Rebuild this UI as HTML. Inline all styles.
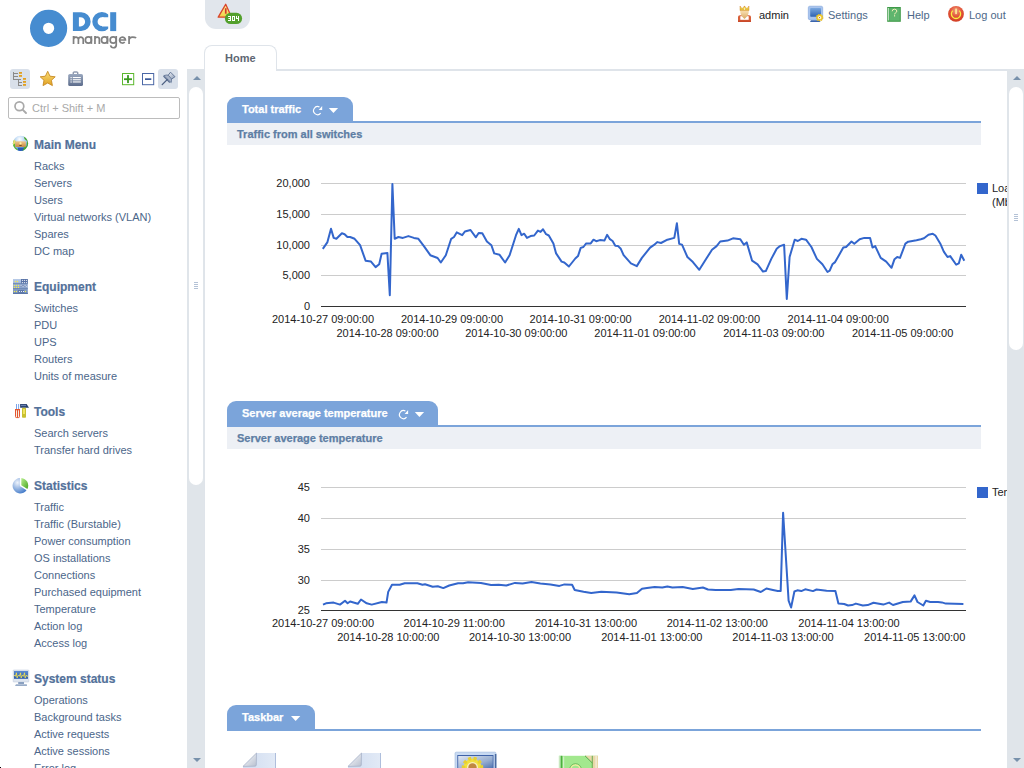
<!DOCTYPE html>
<html><head><meta charset="utf-8">
<style>
*{margin:0;padding:0;box-sizing:border-box}
html,body{width:1024px;height:768px;overflow:hidden;background:#fff;font-family:"Liberation Sans",sans-serif;position:relative}
.abs{position:absolute}
/* logo */
#logo-c{left:30px;top:10px;width:37px;height:37px;border-radius:50%;background:#468cd0}
#logo-h{left:43px;top:23px;width:11px;height:11px;border-radius:50%;background:#fff}
#logo-dci{left:71px;top:5px;font-size:26px;font-weight:bold;color:#468cd0;letter-spacing:-1px;line-height:34px}
#logo-mgr{left:72px;top:28px;font-size:17px;color:#858585;line-height:20px;letter-spacing:-0.2px}
/* alert */
#alert{left:205px;top:0;width:45px;height:29px;background:#e1e6ec;border-radius:0 0 11px 11px}
/* top links */
.tl{font-size:11px;color:#4d6889;top:8px;line-height:14px}
/* sidebar */
.tb{top:69px;width:20px;height:20px;border-radius:3px}
#search{left:8px;top:97px;width:172px;height:22px;border:1px solid #bcbcbc;border-radius:2px}
#search span{position:absolute;left:23px;top:4px;font-size:11px;color:#a9a9a9;line-height:13px}
.mh{left:34px;font-size:12px;font-weight:bold;color:#53719a;line-height:14px;-webkit-text-stroke:0.2px #53719a}
.mi{left:34px;font-size:11px;color:#4b668a;line-height:13px}
/* scroll */
#sscroll{left:187px;top:69px;width:18px;height:699px;background:#e0e5ea}
#sthumb{left:189px;top:87px;width:14px;height:398px;background:#fff;border-radius:7px}
#rscroll{left:1007px;top:69px;width:17px;height:699px;background:#e0e5ea}
#rthumb{left:1009px;top:87px;width:14px;height:263px;background:#fff;border-radius:7px}
.arru{width:0;height:0;border-left:4px solid transparent;border-right:4px solid transparent;border-bottom:4px solid #7891ab}
.arrd{width:0;height:0;border-left:4px solid transparent;border-right:4px solid transparent;border-top:4px solid #7891ab}
/* panel */
#pborder{left:204px;top:60px;width:1px;height:708px;background:#dfe4ea}
#tabline{left:276px;top:69px;width:748px;height:2px;background:#dfe4ea}
#tab{left:204px;top:45px;width:73px;height:26px;border:1px solid #dfe4ea;border-bottom:none;border-radius:8px 8px 0 0;background:#fff}
#tab span{position:absolute;left:20px;top:6px;font-size:11px;font-weight:bold;color:#5e6672;line-height:13px}
/* widgets */
.wtab{left:227px;height:25px;background:#7ba4da;border-radius:9px 9px 0 0}
.wtab span{position:absolute;left:15px;top:6px;font-size:11px;font-weight:bold;color:#fff;line-height:13px;-webkit-text-stroke:0.25px #fff}
.wline{left:227px;width:754px;height:2px;background:#7ba4da}
.wsub{left:227px;width:754px;height:22px;background:#edf0f5}
.wsub span{position:absolute;left:10px;top:5px;font-size:11px;font-weight:bold;color:#5e7ea4;line-height:13px;-webkit-text-stroke:0.25px #5e7ea4}
.ax{font-size:11px;color:#222;line-height:12px;white-space:nowrap}
</style></head><body>

<svg class="abs" style="left:0;top:0" width="150" height="56" viewBox="0 0 150 56">
<circle cx="48.6" cy="28.3" r="12.1" fill="none" stroke="#468cd0" stroke-width="13"/>
<path fill="#468cd0" fill-rule="evenodd" d="M72.9,12.2H81.2A9.45,9.45 0 0 1 81.2,31.1H72.9Z M78.9,17.2H80.5A4.6,4.6 0 0 1 80.5,26.4H78.9Z"/>
<defs><clipPath id="cclip"><path d="M90,10H108.2V17.3H102V26.5H108.2V34H90Z"/></clipPath></defs>
<circle cx="101.9" cy="21.65" r="6.95" fill="none" stroke="#468cd0" stroke-width="5.3" clip-path="url(#cclip)"/>
<rect x="110.2" y="12.2" width="6" height="18.9" fill="#468cd0"/>
<g fill="none" stroke="#808080" stroke-width="1.7">
<path d="M73.55,36.1V43.9M73.55,39.5A2.42,2.42 0 0 1 78.4,39.5V43.9M78.4,39.5A2.42,2.42 0 0 1 83.25,39.5V43.9"/>
<circle cx="88.4" cy="40" r="3.05"/><path d="M91.35,36.1V43.9"/>
<path d="M94.95,36.1V43.9M94.95,39.3A2.2,2.2 0 0 1 99.35,39.3V43.9"/>
<circle cx="104.5" cy="40" r="3.05"/><path d="M107.45,36.1V43.9"/>
<circle cx="113.2" cy="40" r="3.05"/><path d="M116.25,36.1V45.1A2.85,2.85 0 0 1 110.6,45.4"/>
<path d="M119.55,40H125.45A2.95,2.95 0 1 0 124.7,42.05"/>
<path d="M129.05,36.1V43.9M129.05,40.6Q129.05,37.05 132.6,37.05Q135,37.05 136.2,37.9"/>
</g>
</svg>
<div class="abs" id="alert"></div>
<svg class="abs" style="left:205px;top:0" width="45" height="29" viewBox="205 0 45 29">
<defs><linearGradient id="ygr" x1="0" y1="0" x2="0" y2="1"><stop offset="0" stop-color="#fff7a0"/><stop offset="1" stop-color="#f0d040"/></linearGradient></defs>
<path d="M225.7,4.3L231.6,17.2H218.2Z" fill="url(#ygr)" stroke="#d9452c" stroke-width="1.3" stroke-linejoin="round"/>
<rect x="224.9" y="8.2" width="1.7" height="5.5" fill="#d23a2a"/>
<rect x="224.9" y="12.8" width="17.2" height="11.3" rx="5.6" fill="#52a02c"/>
<g fill="#fff">
<path d="M228,15.9h3v5.1h-3v-1h2v-1.1h-1.6v-0.9h1.6v-1.1h-2z"/>
<path d="M232,15.9h3v5.1h-3z M233,16.9v3.1h1v-3.1z" fill-rule="evenodd"/>
<path d="M236,15.9h1v2.1h1v-2.1h1v5.1h-1v-2h-2z"/>
</g>
</svg>

<div class="abs tl" style="left:759px;color:#222">admin</div>
<div class="abs tl" style="left:828px">Settings</div>
<div class="abs tl" style="left:907px">Help</div>
<div class="abs tl" style="left:969px">Log out</div>
<svg class="abs" style="left:730px;top:0" width="240" height="28" viewBox="730 0 240 28">
<defs>
<linearGradient id="face" x1="0" y1="0" x2="0" y2="1"><stop offset="0" stop-color="#fbe3b8"/><stop offset="1" stop-color="#d9a860"/></linearGradient>
<linearGradient id="crown" x1="0" y1="0" x2="0" y2="1"><stop offset="0" stop-color="#f8e860"/><stop offset="1" stop-color="#e0b030"/></linearGradient>
<linearGradient id="scr" x1="0" y1="0" x2="0" y2="1"><stop offset="0" stop-color="#7aa8e0"/><stop offset="1" stop-color="#2f62b0"/></linearGradient>
<radialGradient id="pwr" cx="0.5" cy="0.3" r="0.7"><stop offset="0" stop-color="#f3a080"/><stop offset="0.5" stop-color="#e2553a"/><stop offset="1" stop-color="#d23d22"/></radialGradient>
</defs>
<!-- king -->
<path d="M738,17Q738,15.4 740,15.3H749Q751,15.4 751,17V22H738Z" fill="#d8603a"/>
<rect x="738" y="20.4" width="13" height="1.6" fill="#c94a2a"/>
<rect x="740.3" y="16.2" width="8.4" height="3.6" fill="#fff"/>
<path d="M740.2,10.4H748.8Q749,15.5 744.5,18.9Q740,15.5 740.2,10.4Z" fill="url(#face)"/>
<path d="M740,6.3L742.2,8.6L744.5,6L746.8,8.6L749,6.3V10.6H740Z" fill="url(#crown)" stroke="#d09030" stroke-width="0.45"/>
<circle cx="740.3" cy="6.6" r="0.45" fill="#e05a30"/><circle cx="744.5" cy="6.3" r="0.45" fill="#e05a30"/><circle cx="748.7" cy="6.6" r="0.45" fill="#e05a30"/>
<circle cx="744.5" cy="9" r="0.65" fill="#fff"/>
<!-- settings -->
<rect x="808.3" y="6.2" width="14.4" height="13.5" rx="1.5" fill="#a8c4ee" stroke="#7fa2da" stroke-width="0.6"/>
<rect x="810.2" y="7.9" width="10.8" height="8.9" rx="0.8" fill="url(#scr)"/>
<path d="M811,20.2H819.5L820.5,22H810Z" fill="#3a64ad"/>
<circle cx="819.6" cy="17.6" r="3.1" fill="#f2d030" stroke="#e8b820" stroke-width="1.3" stroke-dasharray="1.2 0.9"/>
<circle cx="819.6" cy="17.6" r="1.5" fill="#fff"/>
<circle cx="819.6" cy="17.6" r="0.6" fill="#c04020"/>
<!-- help -->
<rect x="887.2" y="7" width="13.6" height="14.8" fill="#3f9a48"/>
<rect x="889.3" y="8.2" width="10.5" height="12.5" fill="#5fb56e"/>
<rect x="887.9" y="8" width="0.9" height="12.5" fill="#d8f0d8"/>
<path d="M892.2,11.3Q892.2,9.2 894.5,9.2Q896.8,9.2 896.8,11.1Q896.8,12.3 895.2,13.2Q894.6,13.6 894.6,14.4" fill="none" stroke="#fff4c0" stroke-width="0.9"/>
<rect x="894" y="15.3" width="1.1" height="1.1" fill="#fff4c0"/>
<!-- power -->
<circle cx="956" cy="13.9" r="7.9" fill="url(#pwr)"/>
<path d="M952.8,10.6A4.6,4.6 0 1 0 959.2,10.6" fill="none" stroke="#f8f040" stroke-width="1.3"/>
<rect x="955.3" y="8.6" width="1.5" height="5.5" fill="#fff8a0"/>
</svg>
<div class="abs tb" style="left:10px;background:#d9e0ea"></div>
<div class="abs tb" style="left:158px;background:#d9e0ea"></div>
<div class="abs" id="search"><span>Ctrl + Shift + M</span></div>
<svg class="abs" style="left:0;top:64px" width="186" height="60" viewBox="0 64 186 60">
<defs>
<linearGradient id="star" x1="0" y1="0" x2="0" y2="1"><stop offset="0" stop-color="#fbe07a"/><stop offset="1" stop-color="#e0a020"/></linearGradient>
<linearGradient id="brief" x1="0" y1="0" x2="0" y2="1"><stop offset="0" stop-color="#9aa8bf"/><stop offset="1" stop-color="#5d6d8c"/></linearGradient>
<linearGradient id="pinh" x1="0" y1="0" x2="1" y2="1"><stop offset="0" stop-color="#f0f3f8"/><stop offset="1" stop-color="#8a9ab4"/></linearGradient>
</defs>
<!-- tree -->
<g fill="#8a8a8a">
<rect x="13" y="72" width="1" height="8"/>
<rect x="13" y="73" width="5" height="1"/>
<rect x="13" y="76" width="5" height="1"/>
<rect x="13" y="79" width="8" height="1"/>
<rect x="18" y="79" width="1" height="7"/>
<rect x="18" y="82" width="4" height="1"/>
<rect x="18" y="85" width="4" height="1"/>
</g>
<g fill="#e2a01e">
<rect x="19" y="72" width="3" height="1.8"/>
<rect x="19" y="75" width="3" height="1.8"/>
<rect x="23" y="78" width="3" height="1.8"/>
<rect x="23" y="81" width="3" height="1.8"/>
<rect x="23" y="84" width="3" height="1.8"/>
</g>
<!-- star -->
<path d="M47.7,71.3L50,76.2L55.2,76.8L51.4,80.3L52.4,85.6L47.7,83L43,85.6L44,80.3L40.2,76.8L45.4,76.2Z" fill="url(#star)" stroke="#c78a22" stroke-width="0.9" stroke-linejoin="round"/>
<!-- briefcase -->
<path d="M73.2,74.2V72.6Q73.2,72 73.8,72H77.2Q77.8,72 77.8,72.6V74.2" fill="none" stroke="#5d6d8c" stroke-width="1"/>
<rect x="68.2" y="74" width="14.8" height="12" rx="1.6" fill="url(#brief)"/>
<g fill="#fff"><rect x="70.5" y="77" width="1.2" height="1.2"/><rect x="70.5" y="79.2" width="1.2" height="1.2"/><rect x="70.5" y="81.4" width="1.2" height="1.2"/>
<rect x="72.8" y="77" width="8" height="1.1"/><rect x="72.8" y="79.2" width="8" height="1.1"/><rect x="72.8" y="81.4" width="8" height="1.1"/></g>
<!-- plus -->
<rect x="122.5" y="73.5" width="11.2" height="11.2" fill="#fff" stroke="#5cb82e" stroke-width="1"/>
<rect x="124" y="78.3" width="8" height="1.8" fill="#3a9a20"/>
<rect x="127.1" y="75.1" width="1.8" height="8" fill="#3a9a20"/>
<!-- minus -->
<rect x="142.5" y="73.5" width="11.2" height="11.2" fill="#fff" stroke="#4a67a6" stroke-width="1"/>
<rect x="145" y="78.3" width="6.3" height="1.7" fill="#3c5a9a"/>
<!-- pin -->
<path d="M170.5,72.2L175,76.7L171.3,79.3L167.8,75.7Z" fill="url(#pinh)" stroke="#5a6e90" stroke-width="0.9" stroke-linejoin="round"/>
<path d="M163.5,76.2L169.8,82.5" stroke="#5a6e90" stroke-width="1.2"/>
<path d="M163.8,75.6Q167,74.6 168.3,75.2L171.4,78.8Q171.6,81.2 171.2,82.6Z" fill="#a8b4c8" stroke="#5a6e90" stroke-width="0.8" stroke-linejoin="round"/>
<path d="M167.2,79.6L162.2,84.6" stroke="#4a5e80" stroke-width="1.3" stroke-linecap="round"/>
<!-- search -->
<circle cx="19.4" cy="106.3" r="4.4" fill="none" stroke="#a9a9a9" stroke-width="1.7"/>
<path d="M22.6,109.6L26,113" stroke="#a9a9a9" stroke-width="1.9" stroke-linecap="round"/>
</svg>
<svg class="abs" style="left:0;top:130px" width="34" height="560" viewBox="0 130 34 560">
<defs>
<linearGradient id="gsky" x1="0" y1="0" x2="0" y2="1"><stop offset="0" stop-color="#8ec0f0"/><stop offset="1" stop-color="#f4f8ff"/></linearGradient>
<linearGradient id="gbox" x1="0" y1="0" x2="0" y2="1"><stop offset="0" stop-color="#f0c890"/><stop offset="1" stop-color="#c98a40"/></linearGradient>
<linearGradient id="rack" x1="0" y1="0" x2="0" y2="1"><stop offset="0" stop-color="#b8cbe8"/><stop offset="1" stop-color="#6e8ab8"/></linearGradient>
<radialGradient id="pieb" cx="0.35" cy="0.3" r="0.8"><stop offset="0" stop-color="#eef3fb"/><stop offset="1" stop-color="#3f78c8"/></radialGradient>
<linearGradient id="pieg" x1="0" y1="0" x2="1" y2="1"><stop offset="0" stop-color="#b8ef90"/><stop offset="1" stop-color="#4aa620"/></linearGradient>
<linearGradient id="mon" x1="0" y1="0" x2="0" y2="1"><stop offset="0" stop-color="#5a8ad0"/><stop offset="1" stop-color="#2a5aa8"/></linearGradient>
</defs>
<!-- globe -->
<defs><radialGradient id="gsk2" cx="0.45" cy="0.25" r="0.6"><stop offset="0" stop-color="#ffffff"/><stop offset="1" stop-color="#6aa8e8"/></radialGradient>
<clipPath id="gclip"><circle cx="20.5" cy="143.4" r="7.6"/></clipPath></defs>
<g clip-path="url(#gclip)">
<rect x="12" y="135" width="17" height="17" fill="url(#gsk2)"/>
<path d="M23.5,135L29,135L29,152L21,152L23,148L26.5,146L27,141L24.5,139Z" fill="#4aa82a"/>
<path d="M12,140L15.5,141L15,147L18,149.5L16,152L12,152Z" fill="#5cb830"/>
<path d="M17.5,147.5H24L22.5,152H18.5Z" fill="#2a5cb8"/>
<path d="M13,140.5L15,139.5L15.5,143L13,145Z" fill="#e8e070"/>
</g>
<rect x="15.2" y="141.3" width="10.6" height="5.6" fill="url(#gbox)"/>
<circle cx="20.5" cy="143.3" r="1.1" fill="#fff6a0"/>
<rect x="19.3" y="145" width="2.4" height="0.9" fill="#6a4a20"/>
<!-- equipment rack -->
<rect x="13" y="279" width="14.8" height="15" fill="url(#rack)"/>
<rect x="13" y="283.4" width="14.8" height="0.8" fill="#5a76a8"/>
<rect x="13" y="288.2" width="14.8" height="0.9" fill="#6a84b4"/>
<rect x="13" y="292.9" width="14.8" height="1.1" fill="#5a76a8"/>
<rect x="21" y="279" width="6.8" height="4.5" fill="#5872a6"/>
<rect x="18" y="290.2" width="6" height="2.5" fill="#5872a6"/>
<rect x="20.3" y="285" width="6.5" height="1.7" fill="#7a90bc"/>
<g fill="#f4ee50">
<circle cx="15.4" cy="281.5" r="0.65"/><circle cx="17.5" cy="281.5" r="0.65"/>
<circle cx="14.4" cy="285.4" r="0.65"/><circle cx="16.4" cy="285.4" r="0.65"/><circle cx="18.5" cy="285.4" r="0.65"/>
<circle cx="14.4" cy="287.4" r="0.65"/><circle cx="16.4" cy="287.4" r="0.65"/><circle cx="18.5" cy="287.4" r="0.65"/>
<circle cx="14.4" cy="291.5" r="0.65"/><circle cx="16.4" cy="291.5" r="0.65"/><circle cx="25.5" cy="291.5" r="0.65"/>
</g>
<g fill="#f4f6fa">
<rect x="21.9" y="279.9" width="1" height="1"/><rect x="23.9" y="279.9" width="1" height="1"/><rect x="25.9" y="279.9" width="1" height="1"/>
<rect x="21.9" y="282.1" width="1" height="1"/><rect x="23.9" y="282.1" width="1" height="1"/><rect x="25.9" y="282.1" width="1" height="1"/>
<rect x="20.6" y="285" width="0.9" height="0.9"/><rect x="22.6" y="285.9" width="0.9" height="0.9"/><rect x="24.6" y="285" width="0.9" height="0.9"/><rect x="25.8" y="285.9" width="0.9" height="0.9"/>
<rect x="18.9" y="291" width="1" height="1"/><rect x="20.9" y="291" width="1" height="1"/><rect x="23" y="291" width="1" height="1"/>
</g>
<!-- tools -->
<rect x="16" y="404" width="0.9" height="5" fill="#6a9ae8"/>
<rect x="18.2" y="404" width="0.9" height="5" fill="#6a9ae8"/>
<path d="M15,409H20V416.5Q20,418 18.5,418H16.5Q15,418 15,416.5Z" fill="#f6efe6"/>
<path d="M15,409H20V410.3H15Z" fill="#e4552e"/>
<path d="M15.5,410V416.5Q15.5,417.6 16.6,417.6H18.4Q19.5,417.6 19.5,416.5V410" fill="none" stroke="#e4552e" stroke-width="1"/>
<rect x="17" y="410" width="1" height="7.6" fill="#e4552e"/>
<path d="M20.1,404H26.6L29,407.8H20.1Z" fill="#28406e"/>
<rect x="21" y="404.8" width="5" height="1.3" fill="#6880b0"/>
<rect x="22" y="407.8" width="4" height="10" rx="0.8" fill="#c8c030"/>
<rect x="23" y="409" width="2" height="5" fill="#f0e460"/>
<!-- statistics pie -->
<path d="M19.9,478V485.9L26.5,490.2A7.7,7.7 0 1 1 19.9,478Z" fill="url(#pieb)"/>
<path d="M21.3,477.9A7.7,7.7 0 0 1 27.4,489L21.3,485.2Z" fill="url(#pieg)"/>
<!-- system status monitor -->
<rect x="13.2" y="670" width="15.6" height="12" rx="0.6" fill="#dfe6f0" stroke="#b8c4d8" stroke-width="0.5"/>
<rect x="14" y="671" width="14" height="7.8" fill="url(#mon)"/>
<polyline points="14,676.2 14.8,675.2 15.6,676.3 16.4,672.8 17.1,677.9 17.9,676 18.6,675.2 19.5,676.3 20.5,672.8 21.2,677.9 22,676 22.6,675.2 23.6,676.3 24.5,672.8 25.2,677.9 26,676 26.6,675.2 27.3,676.3 28,676" fill="none" stroke="#f2e050" stroke-width="0.9" stroke-linejoin="round"/>
<rect x="18.2" y="682" width="5.8" height="2" fill="#8aa0c0"/>
<path d="M16,684.2H26.8L27,686H15Z" fill="#98acc8"/>
</svg>
<div class="abs mh" style="top:138px">Main Menu</div>
<div class="abs mi" style="top:160px">Racks</div>
<div class="abs mi" style="top:177px">Servers</div>
<div class="abs mi" style="top:194px">Users</div>
<div class="abs mi" style="top:211px">Virtual networks (VLAN)</div>
<div class="abs mi" style="top:228px">Spares</div>
<div class="abs mi" style="top:245px">DC map</div>

<div class="abs mh" style="top:280px">Equipment</div>
<div class="abs mi" style="top:302px">Switches</div>
<div class="abs mi" style="top:319px">PDU</div>
<div class="abs mi" style="top:336px">UPS</div>
<div class="abs mi" style="top:353px">Routers</div>
<div class="abs mi" style="top:370px">Units of measure</div>

<div class="abs mh" style="top:405px">Tools</div>
<div class="abs mi" style="top:427px">Search servers</div>
<div class="abs mi" style="top:444px">Transfer hard drives</div>

<div class="abs mh" style="top:479px">Statistics</div>
<div class="abs mi" style="top:501px">Traffic</div>
<div class="abs mi" style="top:518px">Traffic (Burstable)</div>
<div class="abs mi" style="top:535px">Power consumption</div>
<div class="abs mi" style="top:552px">OS installations</div>
<div class="abs mi" style="top:569px">Connections</div>
<div class="abs mi" style="top:586px">Purchased equipment</div>
<div class="abs mi" style="top:603px">Temperature</div>
<div class="abs mi" style="top:620px">Action log</div>
<div class="abs mi" style="top:637px">Access log</div>

<div class="abs mh" style="top:672px">System status</div>
<div class="abs mi" style="top:694px">Operations</div>
<div class="abs mi" style="top:711px">Background tasks</div>
<div class="abs mi" style="top:728px">Active requests</div>
<div class="abs mi" style="top:745px">Active sessions</div>
<div class="abs mi" style="top:762px">Error log</div>

<div class="abs" id="sscroll"></div>
<div class="abs" id="sthumb"></div>
<div class="abs arru" style="left:193px;top:76px"></div>
<div class="abs arrd" style="left:193px;top:758px"></div>

<div class="abs" id="pborder"></div>
<div class="abs" id="tabline"></div>
<div class="abs" id="tab"><span>Home</span></div>

<div class="abs" id="rscroll"></div>
<div class="abs" id="rthumb"></div>
<div class="abs arru" style="left:1013px;top:76px"></div>
<div class="abs arrd" style="left:1013px;top:758px"></div>

<!-- CHARTS -->
<svg class="abs" style="left:0;top:0" width="1007" height="768" viewBox="0 0 1007 768" font-family="Liberation Sans" font-size="11" fill="#222222">
<rect x="321" y="183" width="645" height="1" fill="#cccccc"/>
<rect x="321" y="214" width="645" height="1" fill="#cccccc"/>
<rect x="321" y="245" width="645" height="1" fill="#cccccc"/>
<rect x="321" y="275" width="645" height="1" fill="#cccccc"/>
<rect x="321" y="306" width="645" height="1" fill="#333333"/>
<text x="310" y="187" text-anchor="end">20,000</text>
<text x="310" y="218" text-anchor="end">15,000</text>
<text x="310" y="249" text-anchor="end">10,000</text>
<text x="310" y="279" text-anchor="end">5,000</text>
<text x="310" y="310" text-anchor="end">0</text>
<text x="323" y="323" text-anchor="middle">2014-10-27 09:00:00</text>
<text x="452" y="323" text-anchor="middle">2014-10-29 09:00:00</text>
<text x="580.6" y="323" text-anchor="middle">2014-10-31 09:00:00</text>
<text x="709.4" y="323" text-anchor="middle">2014-11-02 09:00:00</text>
<text x="838.2" y="323" text-anchor="middle">2014-11-04 09:00:00</text>
<text x="387.5" y="337" text-anchor="middle">2014-10-28 09:00:00</text>
<text x="516.3" y="337" text-anchor="middle">2014-10-30 09:00:00</text>
<text x="645" y="337" text-anchor="middle">2014-11-01 09:00:00</text>
<text x="773.8" y="337" text-anchor="middle">2014-11-03 09:00:00</text>
<text x="902.6" y="337" text-anchor="middle">2014-11-05 09:00:00</text>
<polyline points="322.8,248.8 327.3,242.4 331,228.8 333.7,237.9 336.4,238.8 341.9,233.3 344.6,234.2 347.4,237 350.1,237 354.6,238.8 360.1,245.2 365.6,260.7 371,261.6 375.6,267.1 379.2,264.3 381.6,253.8 387.4,253 389.8,295.3 392.4,184.1 394.7,238.8 398.4,237 402.9,237.9 408.4,236.1 413.9,237.9 418.4,238.8 423.9,246.1 430.3,255.2 437.6,258 440.8,262.5 445.8,255.2 451.2,238.8 454,237 456.7,232.4 462.2,235.2 464.9,231.5 470.5,230 475.9,237.3 478.7,233 482.3,233.3 486.9,241.5 491.4,245.2 494.2,253.4 499.6,254.8 505.1,262.5 509.6,255.2 516,235.2 518.8,228.8 521.5,235.2 524.2,233.7 527,237.9 530.6,236.1 534.2,235.5 537.9,230.6 540.6,231.9 543,229.3 546.1,234.2 548.8,235.5 553.4,243.4 556.1,253.4 561.6,261.6 564.3,262.5 568.9,266.5 575.3,258.5 578,256.1 580.7,247.9 583.4,247 586.2,243.4 590.7,243.4 593.5,239.7 596.2,241.2 599.9,240.1 604.4,240.6 607.1,234.8 609.9,239.2 612.6,241 615.3,245.7 618.1,246.1 620.8,248.8 623.6,255.2 630.9,263.4 636.8,266.1 641.9,257.9 650.1,247.6 653.7,245.2 657.4,242.1 661,243 667.4,239.7 674.3,237.9 676.9,223.3 679.2,243.9 682,244.6 687.4,257 692.9,262.1 699.3,269.8 705.6,259.8 712,249.7 716.6,246.1 720.2,241.5 727.5,240.6 733,238.3 740.3,239.2 743.9,244.8 746.7,242.4 752.1,260.7 757.6,264.3 763,271.6 765.8,271.1 771.3,258.9 776.7,248.8 780,246.1 784.1,244.8 786.8,299 789.6,257 794.7,239.7 797.8,241 801.4,238.8 806,239.7 811.4,247 816.9,258.9 822.4,264.3 827.5,272 829.7,270.7 832.4,264.3 835.1,262.1 843.3,247.6 846.1,247 851.5,241.5 854.3,243.7 859.7,239.2 864.3,237.9 870.1,237.9 872.5,247.6 875.2,246.1 880.7,257.9 886.2,261.6 891.5,267.8 894.5,259.2 897.2,257 900,257.9 905.4,243.6 908.2,241.7 916.5,240.3 920.8,239.2 924,238.2 928.5,234.7 932.8,233.8 935.4,235.5 940.2,243.4 943.8,251.6 947.5,257 950.2,256.1 956.2,264.7 958.8,263.4 961.2,254.8 964.3,260.7" fill="none" stroke="#3366cc" stroke-width="2" stroke-linejoin="round"/>
<rect x="977" y="183" width="11" height="11" fill="#3366cc"/>
<text x="992" y="192">Load</text>
<text x="992" y="206">(Mb/s)</text>
<rect x="321" y="487" width="645" height="1" fill="#cccccc"/>
<rect x="321" y="518" width="645" height="1" fill="#cccccc"/>
<rect x="321" y="549" width="645" height="1" fill="#cccccc"/>
<rect x="321" y="580" width="645" height="1" fill="#cccccc"/>
<rect x="321" y="610" width="645" height="1" fill="#333333"/>
<text x="310" y="491" text-anchor="end">45</text>
<text x="310" y="522" text-anchor="end">40</text>
<text x="310" y="553" text-anchor="end">35</text>
<text x="310" y="584" text-anchor="end">30</text>
<text x="310" y="614" text-anchor="end">25</text>
<text x="323" y="627" text-anchor="middle">2014-10-27 09:00:00</text>
<text x="454.2" y="627" text-anchor="middle">2014-10-29 11:00:00</text>
<text x="586" y="627" text-anchor="middle">2014-10-31 13:00:00</text>
<text x="717.3" y="627" text-anchor="middle">2014-11-02 13:00:00</text>
<text x="849" y="627" text-anchor="middle">2014-11-04 13:00:00</text>
<text x="388.3" y="641" text-anchor="middle">2014-10-28 10:00:00</text>
<text x="520" y="641" text-anchor="middle">2014-10-30 13:00:00</text>
<text x="651.8" y="641" text-anchor="middle">2014-11-01 13:00:00</text>
<text x="783" y="641" text-anchor="middle">2014-11-03 13:00:00</text>
<text x="914.7" y="641" text-anchor="middle">2014-11-05 13:00:00</text>
<polyline points="323,604.6 326,603.3 333.6,602.6 340,604.6 345,600.8 347.6,603.3 350.1,601.5 357.8,603.8 361,599.5 366.7,603.3 371.7,604.6 381.9,602 386.5,602.6 388.2,591.9 392,584.8 399.7,584.8 404.7,583.3 417.4,583.3 422.5,584.8 425,584.3 432.7,586.8 437.8,586.3 443.3,588.1 449.2,585.5 458.1,583.3 463.1,583.3 468.2,582.2 480.9,583 491.1,585 498.7,584.8 506.3,585.5 515,582.9 522.6,583.4 531.5,581.9 540.4,583.4 550.5,584.4 559.4,585.9 564.5,584.4 572.1,584.7 574.7,590 583.6,591.8 591.2,593.1 601.3,591.8 616.6,592.5 629.3,594.3 636.9,593.1 642,588.7 647,588 654.7,587 662.3,587.5 667.4,586.4 672.4,587.5 682.6,587 692.8,589 702.9,587.5 708,589.5 715.6,590 730.8,590 738.5,589 753.7,589.5 760.8,592 766.4,588.5 772.9,589.9 777.8,590.9 780.7,590.9 783.1,512.7 788.6,600.6 791.1,607.5 794.4,591.5 797.3,590.3 801.3,591.1 805.2,589.3 813,591.1 816.5,589.5 826.6,590.7 835.4,590.9 838.4,603.6 844.2,604 848.1,605.5 852,605.1 855.9,603.6 862.8,605.5 867.7,605.1 873.5,602.8 883.3,604.6 889.1,602.6 893,605 902.8,602 910.6,601.6 914.5,595.4 917.5,602 923.3,605.5 925.9,600.8 930.2,602 938,602 941.9,602.4 945.8,603.6 963.4,604" fill="none" stroke="#3366cc" stroke-width="2" stroke-linejoin="round"/>
<rect x="977" y="487" width="11" height="11" fill="#3366cc"/>
<text x="992" y="496">Temperature</text>
</svg>
<!-- /CHARTS -->
<!-- widget 1 -->
<div class="abs wtab" style="top:97px;width:126px"><span>Total traffic</span></div>
<div class="abs wline" style="top:121px"></div>
<div class="abs wsub" style="top:123px"><span>Traffic from all switches</span></div>

<!-- widget 2 -->
<div class="abs wtab" style="top:401px;width:211px"><span>Server average temperature</span></div>
<div class="abs wline" style="top:425px"></div>
<div class="abs wsub" style="top:427px"><span>Server average temperature</span></div>

<!-- taskbar -->
<div class="abs wtab" style="top:705px;width:88px"><span>Taskbar</span></div>
<div class="abs wline" style="top:729px"></div>

<svg class="abs" style="left:230px;top:740px" width="380" height="28" viewBox="230 740 380 28">
<defs>
<linearGradient id="pg" x1="0" y1="0" x2="1" y2="0"><stop offset="0" stop-color="#d0dcf0"/><stop offset="1" stop-color="#e2eaf6"/></linearGradient>
<linearGradient id="fold" x1="0" y1="0" x2="1" y2="1"><stop offset="0" stop-color="#ffffff"/><stop offset="1" stop-color="#b8c0d0"/></linearGradient>
<linearGradient id="tmon" x1="0" y1="0" x2="1" y2="1"><stop offset="0" stop-color="#dfe6f2"/><stop offset="0.6" stop-color="#98aed0"/><stop offset="1" stop-color="#4a70b0"/></linearGradient>
<linearGradient id="tbook" x1="0" y1="0" x2="1" y2="0"><stop offset="0" stop-color="#5cc050"/><stop offset="1" stop-color="#9ee08a"/></linearGradient>
</defs>
<!-- page 1 -->
<path d="M256.5,753H275.6V768H243V766.4Z" fill="url(#pg)"/>
<rect x="275" y="753" width="0.9" height="15" fill="#a8b8d8"/>
<path d="M256.5,753L243,766.4L255.2,766.2Q256.2,766 256.3,765Z" fill="url(#fold)" stroke="#9aa6c0" stroke-width="0.6"/>
<!-- page 2 -->
<path d="M361.5,753H380.6V768H348V766.4Z" fill="url(#pg)"/>
<rect x="380" y="753" width="0.9" height="15" fill="#a8b8d8"/>
<path d="M361.5,753L348,766.4L360.2,766.2Q361.2,766 361.3,765Z" fill="url(#fold)" stroke="#9aa6c0" stroke-width="0.6"/>
<!-- monitor -->
<rect x="455.1" y="752.2" width="40.8" height="18" rx="1" fill="#c8daf2" stroke="#a8c0e0" stroke-width="0.8"/>
<rect x="494.8" y="754" width="1.6" height="14" fill="#4a6aa0"/>
<rect x="457.3" y="755" width="36.2" height="14" fill="#3e62a8"/>
<rect x="458.2" y="756" width="34.5" height="13" fill="url(#tmon)"/>
<circle cx="472.5" cy="767.5" r="9" fill="#f2e040" stroke="#e8d030" stroke-width="3.5" stroke-dasharray="3 2.4"/>
<circle cx="472.5" cy="767.5" r="5.5" fill="#f8f0c0"/>
<circle cx="472.5" cy="767.5" r="4.2" fill="#c08840"/>
<!-- book -->
<rect x="558.9" y="755.8" width="39.1" height="14" fill="#a2e88e"/>
<rect x="558.9" y="755.8" width="1.8" height="14" fill="#c8e8c0"/>
<rect x="560.7" y="755.8" width="1.6" height="14" fill="#4cb040"/>
<rect x="563" y="756.5" width="1.2" height="14" fill="#d0f0c8"/>
<path d="M585,755.8L592,762.5V770H598V755.8Z" fill="#e8d8a8"/>
<path d="M585,755.8L592.4,763" stroke="#3e9838" stroke-width="0.8"/>
<rect x="591.8" y="755.8" width="0.9" height="14" fill="#5aa848"/>
<rect x="595.5" y="755.8" width="1.2" height="14" fill="#f6f0e0"/>
<circle cx="575.5" cy="769.5" r="4.8" fill="none" stroke="#f0f0a0" stroke-width="1.6"/>
<circle cx="575.5" cy="769.5" r="5.8" fill="none" stroke="#4aa040" stroke-width="0.6"/>
</svg>
<div class="abs" style="left:0;top:767px;width:1px;height:1px;background:#000"></div>
<svg class="abs" style="left:0;top:0" width="1007" height="768" viewBox="0 0 1007 768"><path d="M319.50,107.10A4,4 0 1 0 320.66,113.17" fill="none" stroke="#fff" stroke-width="1.15"/><path d="M318.70,110.10H322.20V106.10Z" fill="#fff"/><path d="M328.8,108H338.1L333.45,112.9Z" fill="#fff"/><path d="M405.40,411.10A4,4 0 1 0 406.56,417.17" fill="none" stroke="#fff" stroke-width="1.15"/><path d="M404.60,414.10H408.10V410.10Z" fill="#fff"/><path d="M414.8,412H424.1L419.45,416.9Z" fill="#fff"/><path d="M291,716H300.3L295.65,720.9Z" fill="#fff"/></svg>
<svg class="abs" style="left:0;top:0" width="1024" height="768" viewBox="0 0 1024 768">
<g fill="#b4c2d6">
<rect x="194" y="282" width="4" height="1"/><rect x="194" y="284" width="4" height="1"/><rect x="194" y="286" width="4" height="1"/><rect x="194" y="288" width="4" height="1"/>
<rect x="1014" y="214" width="4" height="1"/><rect x="1014" y="216" width="4" height="1"/><rect x="1014" y="218" width="4" height="1"/><rect x="1014" y="220" width="4" height="1"/>
</g></svg>
</body></html>
